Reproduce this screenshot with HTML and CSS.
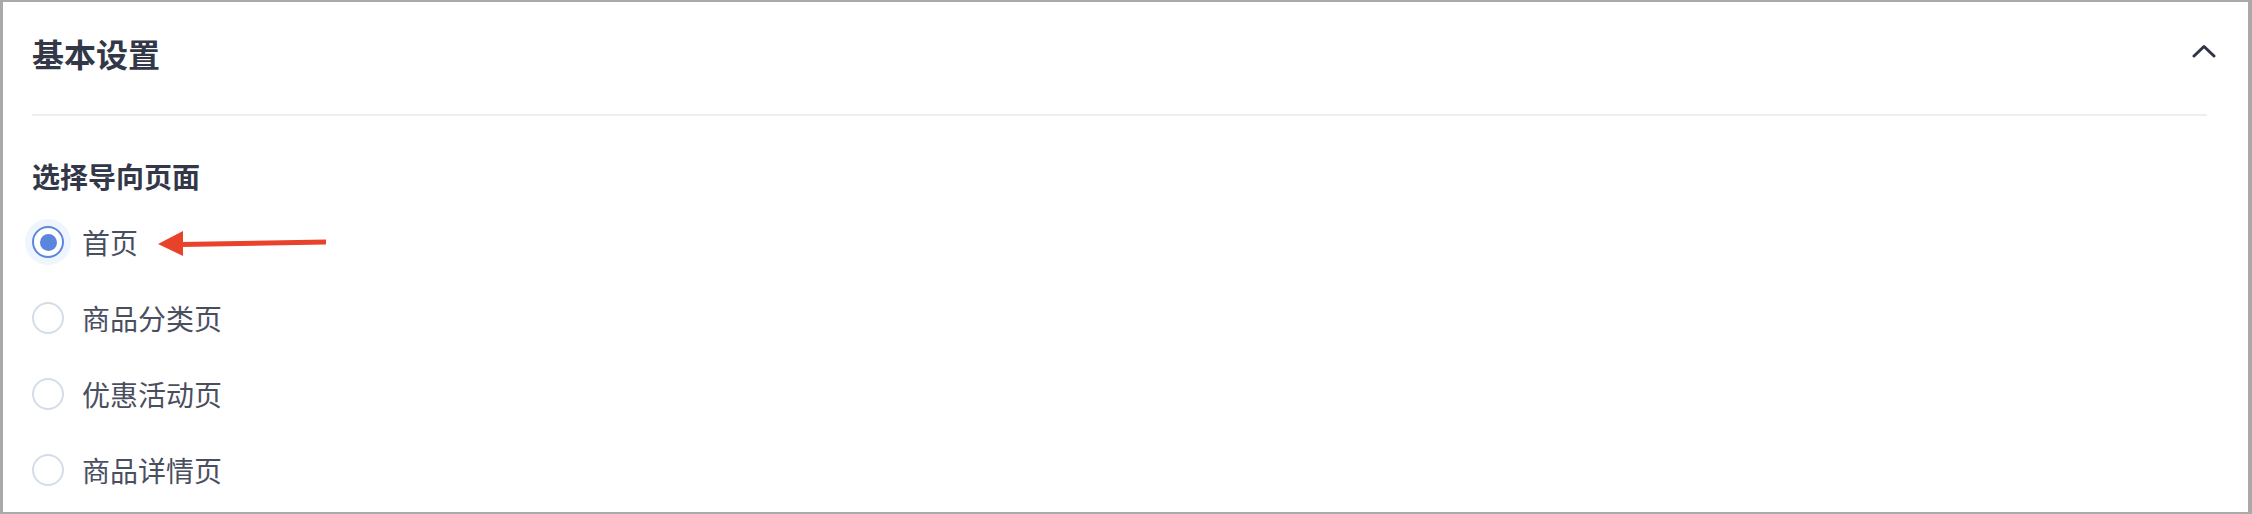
FILE: index.html
```html
<!DOCTYPE html>
<html lang="zh-CN">
<head>
  <meta charset="UTF-8" />
  <meta name="viewport" content="width=device-width, initial-scale=1.0" />
  <title>基本设置</title>
  <link rel="stylesheet" href="styles.css">
</head>
<body>
  <div class="panel">
    <header class="panel-head">
      <h2>基本设置</h2>
      <span class="toggle">
        <svg width="24" height="14" viewBox="0 0 24 14">
          <path d="M2 12 L12 2.5 L22 12" fill="none" stroke="#2f3447" stroke-width="3" stroke-linecap="round" stroke-linejoin="round"/>
        </svg>
      </span>
    </header>
    <div class="divider"></div>

    <div class="field">
      <div class="field-label">选择导向页面</div>
      <ul class="radios">
        <li class="radio checked">
          <span class="dot"></span>
          <span class="text">首页</span>
          <svg class="pointer" width="172" height="28" viewBox="0 0 172 28">
            <path d="M22 15.5 L168 13" stroke="#e8422b" stroke-width="5" stroke-linecap="butt"/>
            <polygon points="0,15 25,2 25,27" fill="#e8422b"/>
          </svg>
        </li>
        <li class="radio"><span class="dot"></span><span class="text">商品分类页</span></li>
        <li class="radio"><span class="dot"></span><span class="text">优惠活动页</span></li>
        <li class="radio"><span class="dot"></span><span class="text">商品详情页</span></li>
      </ul>
    </div>
  </div>
</body>
</html>
```

FILE: styles.css
```css
* {
  margin: 0;
  padding: 0;
  box-sizing: border-box;
}
body {
  background-color: #ffffff;
  font-family: "Noto Sans CJK SC", "Noto Sans", sans-serif;
}
.panel {
  width: 2252px;
  height: 514px;
  border-style: solid;
  border-color: #a9a9a9;
  border-width: 2px 4px 2px 3px;
  background-color: #fff;
  padding: 0 0 0 29px;
  overflow: hidden;
}
.panel-head {
  height: 102px;
  display: flex;
  align-items: center;
  justify-content: space-between;
  padding-right: 32px;
}
.panel-head h2 {
  font-size: 32px;
  font-weight: 600;
  color: #333848;
  line-height: 40px;
}
.toggle {
  display: flex;
  margin-top: -4px;
}
.divider {
  height: 2px;
  margin: 10px 41px 0 0;
  background-color: #eeeeee;
}

.field-label {
  margin-top: 40px;
  line-height: 40px;
  font-size: 28px;
  font-weight: 600;
  color: #333848;
}
.radios {
  list-style: none;
  margin-top: 8px;
}
.radio {
  position: relative;
  height: 76px;
  display: flex;
  align-items: center;
  gap: 18px;
  font-size: 28px;
  color: #4a4f5f;
}
.radio .dot {
  width: 32px;
  height: 32px;
  border-radius: 50%;
  border: 2px solid #d3dce8;
  background-color: #fff;
  flex-shrink: 0;
}
.radio.checked .dot {
  border-color: #5b86de;
  box-shadow: 0 0 0 7px #eef5fd;
  display: flex;
  align-items: center;
  justify-content: center;
}
.radio.checked .dot::after {
  content: "";
  width: 17px;
  height: 17px;
  border-radius: 50%;
  background-color: #5b86de;
}
.radio .text {
  line-height: 40px;
}
/* red hint arrow next to the selected option */
.pointer {
  margin-left: 2px;
  margin-top: 2px;
}
```
